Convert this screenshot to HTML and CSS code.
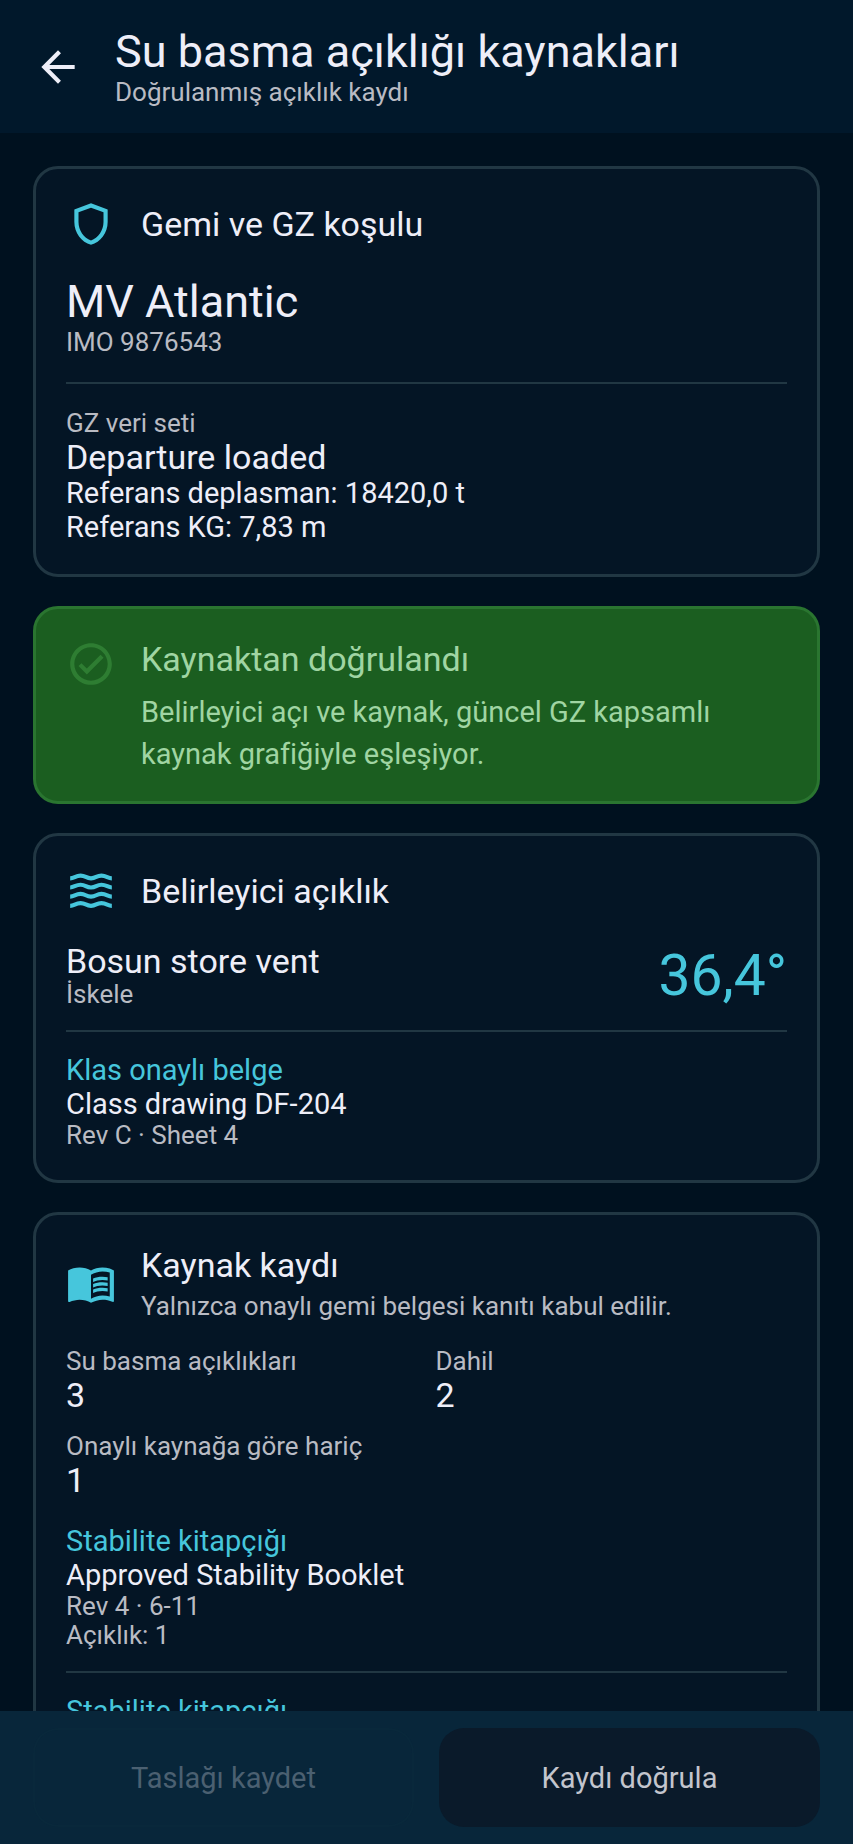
FILE: index.html
```html
<!DOCTYPE html>
<html lang="tr">
<head>
    <meta charset="UTF-8">
    <meta name="viewport" content="width=device-width, initial-scale=1.0">
    <title>Su basma açıklığı kaynakları</title>
    <link rel="stylesheet" href="styles.css">
</head>
<body>
    <header class="app-bar">
        <button class="back-btn" type="button" aria-label="Geri">
            <svg class="icon" viewBox="0 0 24 24"><path d="M20 11H7.83l5.59-5.59L12 4l-8 8 8 8 1.41-1.41L7.83 13H20z"/></svg>
        </button>
        <div>
            <h1>Su basma açıklığı kaynakları</h1>
            <p class="small">Doğrulanmış açıklık kaydı</p>
        </div>
    </header>

    <main class="content">
        <section class="card">
            <div class="card-header">
                <svg class="icon" viewBox="0 0 24 24"><path d="M12 2L4 5v6.09c0 5.05 3.41 9.76 8 10.91 4.59-1.15 8-5.86 8-10.91V5l-8-3zm6 9.09c0 4-2.55 7.7-6 8.83-3.45-1.13-6-4.82-6-8.83v-4.7l6-2.25 6 2.25v4.7z"/></svg>
                <h2>Gemi ve GZ koşulu</h2>
            </div>
            <p class="vessel-name">MV Atlantic</p>
            <p class="small">IMO 9876543</p>
            <hr class="divider divider-wide">
            <p class="small">GZ veri seti</p>
            <p class="large">Departure loaded</p>
            <p>Referans deplasman: 18420,0 t</p>
            <p>Referans KG: 7,83 m</p>
        </section>

        <section class="card status">
            <svg class="icon" viewBox="0 0 24 24"><path d="M12 2C6.48 2 2 6.48 2 12s4.48 10 10 10 10-4.48 10-10S17.52 2 12 2zm0 18c-4.41 0-8-3.59-8-8s3.59-8 8-8 8 3.59 8 8-3.59 8-8 8zm4.59-12.42L10 14.17l-2.59-2.58L6 13l4 4 8-8z"/></svg>
            <div>
                <h2>Kaynaktan doğrulandı</h2>
                <p class="status-text">Belirleyici açı ve kaynak, güncel GZ kapsamlı kaynak grafiğiyle eşleşiyor.</p>
            </div>
        </section>

        <section class="card">
            <div class="card-header">
                <svg class="icon waves" viewBox="0 0 24 24">
                    <path d="M2 5.900c2 0 2.500-1.300 5-1.300s2.500 1.300 5 1.300 2.500-1.300 5-1.300 3 1.300 5 1.300"/>
                    <path d="M2 10.300c2 0 2.500-1.300 5-1.300s2.500 1.300 5 1.300 2.500-1.300 5-1.300 3 1.300 5 1.300"/>
                    <path d="M2 14.700c2 0 2.500-1.300 5-1.300s2.500 1.300 5 1.300 2.500-1.300 5-1.300 3 1.300 5 1.300"/>
                    <path d="M2 19.100c2 0 2.500-1.300 5-1.300s2.500 1.300 5 1.300 2.500-1.300 5-1.300 3 1.300 5 1.300"/>
                </svg>
                <h2>Belirleyici açıklık</h2>
            </div>
            <div class="opening">
                <div>
                    <p class="large">Bosun store vent</p>
                    <p class="small">İskele</p>
                </div>
                <p class="angle">36,4°</p>
            </div>
            <hr class="divider">
            <p class="source-type">Klas onaylı belge</p>
            <p>Class drawing DF-204</p>
            <p class="small">Rev C · Sheet 4</p>
        </section>

        <section class="card">
            <div class="card-header">
                <svg class="icon" viewBox="0 0 24 24"><path d="M21 5c-1.110-.350-2.330-.500-3.500-.500-1.950 0-4.050.400-5.500 1.500-1.450-1.100-3.550-1.500-5.500-1.500S2.450 4.900 1 6v14.650c0 .250.250.500.500.500.100 0 .150-.050.250-.050C3.100 20.450 5.050 20 6.500 20c1.950 0 4.050.400 5.500 1.500 1.350-.850 3.800-1.500 5.500-1.500 1.650 0 3.350.300 4.750 1.050.100.050.150.050.250.050.250 0 .500-.250.500-.500V6c-.600-.450-1.250-.750-2-1zm0 13.500c-1.100-.350-2.300-.500-3.500-.500-1.700 0-4.150.650-5.500 1.500V8c1.350-.850 3.800-1.500 5.500-1.500 1.200 0 2.400.150 3.500.500v11.500z"/><path d="M17.500 10.500c.880 0 1.730.090 2.500.260V9.240c-.790-.150-1.640-.240-2.500-.240-1.700 0-3.240.290-4.500.830v1.660c1.130-.640 2.700-.990 4.500-.990zM13 12.490v1.660c1.130-.640 2.700-.990 4.500-.990.880 0 1.730.090 2.500.260V11.900c-.790-.150-1.640-.240-2.500-.240-1.700 0-3.240.300-4.500.830zM17.500 14.330c-1.700 0-3.240.290-4.500.830v1.660c1.130-.640 2.700-.990 4.500-.990.880 0 1.730.090 2.500.260v-1.520c-.790-.160-1.640-.240-2.500-.240z"/></svg>
                <div>
                    <h2>Kaynak kaydı</h2>
                    <p class="small card-note">Yalnızca onaylı gemi belgesi kanıtı kabul edilir.</p>
                </div>
            </div>
            <div class="stats">
                <div>
                    <p class="small">Su basma açıklıkları</p>
                    <p class="large">3</p>
                </div>
                <div>
                    <p class="small">Dahil</p>
                    <p class="large">2</p>
                </div>
                <div>
                    <p class="small">Onaylı kaynağa göre hariç</p>
                    <p class="large">1</p>
                </div>
            </div>
            <p class="source-type">Stabilite kitapçığı</p>
            <p>Approved Stability Booklet</p>
            <p class="small">Rev 4 · 6-11</p>
            <p class="small">Açıklık: 1</p>
            <hr class="divider">
            <p class="source-type">Stabilite kitapçığı</p>
        </section>
    </main>

    <footer class="actions">
        <button class="btn btn-draft" type="button" disabled>Taslağı kaydet</button>
        <button class="btn btn-verify" type="button">Kaydı doğrula</button>
    </footer>
</body>
</html>
```
FILE: styles.css
```css
* {
    box-sizing: border-box;
}

body {
    display: flex;
    flex-direction: column;
    height: 100vh;
    margin: 0;
    background: #00111f;
    color: #eeeef8;
    font-family: Roboto, "Noto Sans", sans-serif;
    font-size: 29px;
    line-height: 34px;
}

h1, h2, p {
    margin: 0;
    font-weight: 400;
}

h1 {
    font-size: 45px;
    line-height: 52px;
}

h2 {
    font-size: 34px;
    line-height: 40px;
}

.small {
    color: #b9bbc3;
    font-size: 26px;
    line-height: 29px;
}

.large {
    font-size: 34px;
    line-height: 38px;
}

.icon {
    display: block;
    flex: none;
    width: 50px;
    height: 50px;
    fill: currentColor;
}

.waves {
    fill: none;
    stroke: currentColor;
    stroke-width: 2;
}

/* Top bar */
.app-bar {
    display: flex;
    flex: none;
    align-items: center;
    gap: 32px;
    padding: 26px 33px;
    background: #01182b;
}

.back-btn {
    padding: 0;
    border: none;
    background: none;
    color: inherit;
    cursor: pointer;
}

/* Scrolling area */
.content {
    flex: 1;
    min-height: 0;
    padding: 33px;
    overflow-y: auto;
    scrollbar-width: none;
}

.card {
    margin-bottom: 29px;
    padding: 30px;
    border: 3px solid #213743;
    border-radius: 25px;
    background: #041525;
}

.card-header {
    display: flex;
    align-items: center;
    gap: 25px;
    margin-bottom: 26px;
}

.card-header .icon,
.source-type,
.angle {
    color: #46c6dc;
}

.card-note {
    margin-top: 7px;
}

.vessel-name {
    font-size: 45px;
    line-height: 53px;
}

.divider {
    height: 2px;
    margin: 21px 0;
    border: none;
    background: #213743;
}

.divider-wide {
    margin: 25px 0;
}

.status {
    display: flex;
    gap: 25px;
    padding-bottom: 26px;
    border-color: #2a7530;
    background: #1b5e20;
    color: #a0d5a3;
}

.status .icon {
    color: #2e7d32;
}

.status-text {
    margin-top: 12px;
    line-height: 42px;
}

.opening {
    display: flex;
    align-items: center;
    justify-content: space-between;
}

.angle {
    font-size: 57px;
    line-height: 67px;
}

.stats {
    display: grid;
    grid-template-columns: 1fr 1fr;
    gap: 18px;
    margin-bottom: 25px;
}

/* Bottom bar */
.actions {
    display: flex;
    flex: none;
    gap: 25px;
    padding: 17px 33px;
    background: #08263a;
}

.btn {
    flex: 1;
    height: 99px;
    border: none;
    border-radius: 25px;
    font: inherit;
    cursor: pointer;
}

.btn-draft {
    background: transparent;
    box-shadow: inset 0 0 0 2px #09283b;
    color: #4b6071;
    cursor: default;
}

.btn-verify {
    background: #0a1a2a;
    color: #c3c5cd;
}
```
